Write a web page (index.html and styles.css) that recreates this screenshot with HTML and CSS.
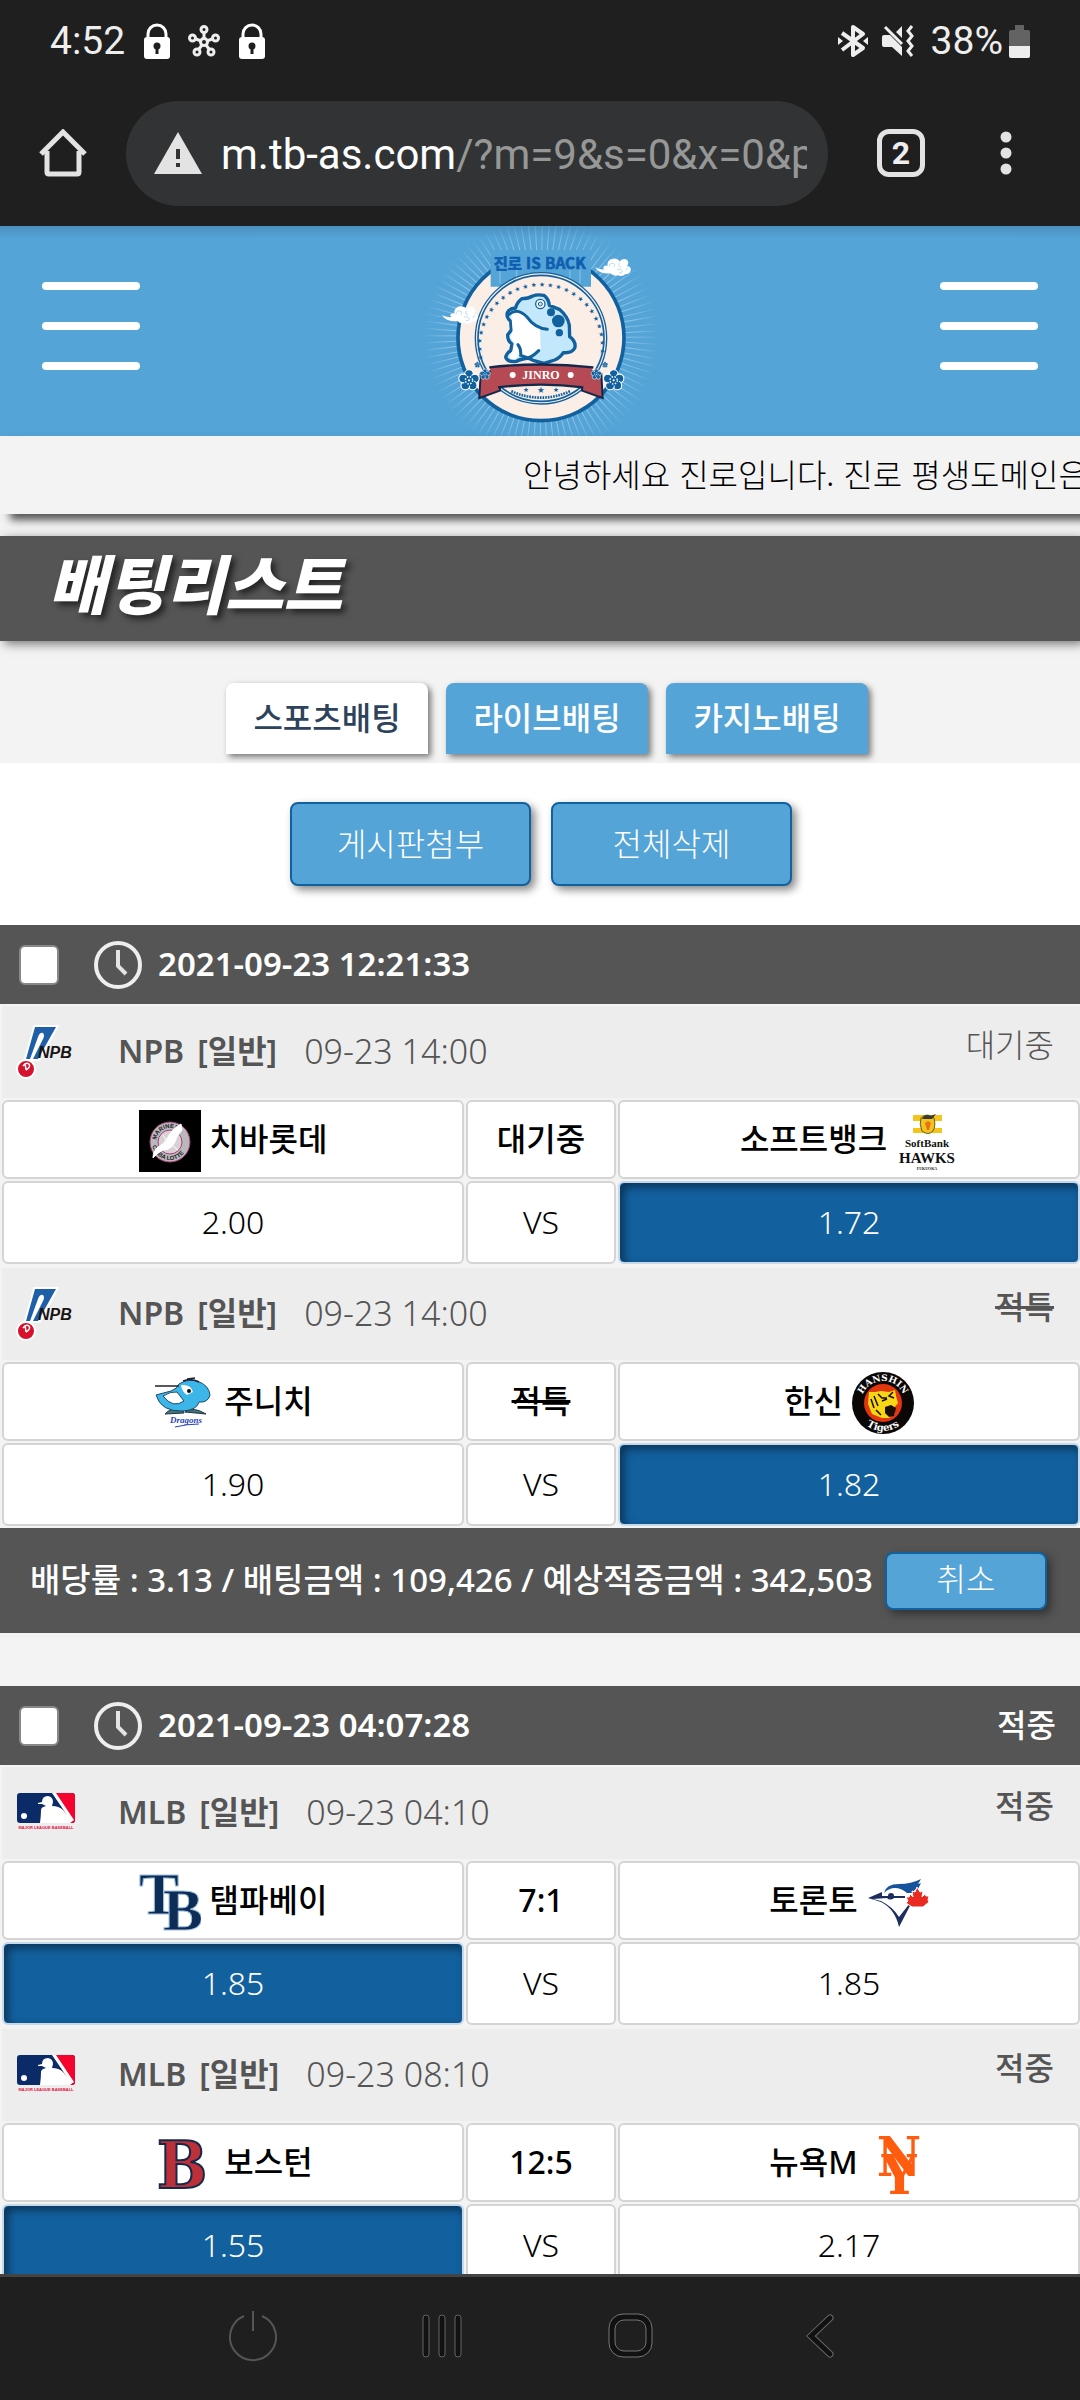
FILE: index.html
```html
<!DOCTYPE html>
<html lang="ko">
<head>
<meta charset="utf-8">
<meta name="viewport" content="width=device-width, initial-scale=1">
<title>배팅리스트</title>
<link rel="stylesheet" href="styles.css">
</head>
<body>
<svg class="defs" aria-hidden="true">
  <symbol id="lock" viewBox="0 0 26 36"><path d="M4 16V11a9 9 0 0 1 18 0v5" fill="none" stroke="#fff" stroke-width="3"/><rect y="14" width="26" height="22" rx="3" fill="#fff"/><circle cx="13" cy="23" r="3.500" fill="#1f1f1f"/><rect x="11.500" y="24" width="3" height="7" fill="#1f1f1f"/></symbol>
  <symbol id="clock" viewBox="0 0 48 48"><circle cx="24" cy="24" r="22" fill="none" stroke="#eee" stroke-width="4"/><path d="M24 9v16l8 8" fill="none" stroke="#e4e4e4" stroke-width="4"/></symbol>
  <symbol id="npb" viewBox="0 0 60 56">
    <path d="M19 4H40L23 36H10Z" fill="#1f5fa8" stroke="#fff" stroke-width="4"/>
    <path d="M19 4H40L22 36H10Z" fill="#1f5fa8"/>
    <path d="M14 36L22 14Q24 9 27 10Q29 12 27 16L17 36Z" fill="#fff"/>
    <text x="22" y="35" class="npb-text">NPB</text>
    <ellipse cx="10" cy="46" rx="9" ry="9" fill="#d7102b" stroke="#fff" stroke-width="2"/>
    <path d="M7 43q3-4 6-2q2 3-3 6M9 40l1 7" fill="none" stroke="#fff" stroke-width="1.500"/>
  </symbol>
  <symbol id="mlb" viewBox="0 0 58 38">
    <rect width="58" height="30" rx="3" fill="#0a2a68"/>
    <path d="M38 0H55a3 3 0 0 1 3 3V27a3 3 0 0 1-3 3H53Z" fill="#f5022f"/>
    <path d="M35 0H39L57 27L53 30H23Q24 22 24 17Q24 14 29 13L25 11H21V10L25 9Q25 3 31 3Q36 4 36 9L35 13Q42 13 46 17L50 22Z" fill="#fff"/>
    <circle cx="7" cy="23" r="3" fill="#fff"/>
    <text x="29" y="36" text-anchor="middle" class="mlb-text">MAJOR LEAGUE BASEBALL</text>
  </symbol>
  <symbol id="flower" viewBox="-32 -32 64 64">
    <g fill="#12619f" stroke="#fff" stroke-width="3"><circle cy="-17" r="12"/><circle cx="16" cy="-5" r="12"/><circle cx="10" cy="14" r="12"/><circle cx="-10" cy="14" r="12"/><circle cx="-16" cy="-5" r="12"/></g>
    <circle r="15" fill="#12619f"/><circle r="10" fill="none" stroke="#fff" stroke-width="4" stroke-dasharray="4 4"/><circle r="3" fill="#fff"/>
  </symbol>
  <symbol id="cloud" viewBox="0 0 110 60">
    <path d="M0 30Q12 38 30 36Q22 34 26 28Q31 22 37 26Q36 6 54 4Q68 2 74 12Q86 0 96 8Q104 16 96 26Q110 28 107 40Q104 50 92 50Q82 60 68 54Q56 58 46 48Q14 52 0 30Z" fill="#fff"/>
    <path d="M42 28q2-12 14-10q8 6 0 12M74 16q-8 10 4 14M66 36q14-2 16 6q-2 8-10 4M92 40q6-4 4-10" fill="none" stroke="#9fcbe8" stroke-width="2"/>
  </symbol>
</svg>

<header class="device">
  <div class="status">
    <span>4:52</span>
    <svg class="lock" role="img" aria-label="잠금"><use href="#lock"/></svg>
    <svg class="hub" viewBox="0 0 32 32" role="img" aria-label="허브"><g fill="none" stroke="#eee" stroke-width="3"><circle cx="16" cy="17" r="3.500"/><circle cx="16" cy="4.500" r="3"/><circle cx="27.500" cy="13" r="3"/><circle cx="23" cy="27" r="3"/><circle cx="9" cy="27" r="3"/><circle cx="4.500" cy="13" r="3"/><path d="M16 8v5M19 16l5-2M18 20l3 4M14 20l-3 4M13 16l-5-2"/></g></svg>
    <svg class="lock" role="img" aria-label="잠금"><use href="#lock"/></svg>
    <span class="status-fill"></span>
    <svg class="bt" viewBox="0 0 30 34" role="img" aria-label="블루투스"><path d="M4 9L25 24L15 31V3L25 10L4 26" fill="none" stroke="#eee" stroke-width="4" stroke-linejoin="round"/><path d="M0 13l5 4l-5 4ZM30 13l-5 4l5 4Z" fill="#eee"/></svg>
    <svg class="mute" viewBox="0 0 32 34" role="img" aria-label="무음"><path d="M2 11H8L20 23V32L10 23H2Q0 23 0 21V13Q0 11 2 11ZM14 8L20 2V14Z" fill="#eee"/><path d="M3 3L20 20" stroke="#eee" stroke-width="3"/><path d="M30 2l-4 5l4 5l-4 5l4 5l-4 5l4 5" fill="none" stroke="#eee" stroke-width="3"/></svg>
    <span class="pct">38%</span>
    <svg class="battery" viewBox="0 0 21 33" role="img" aria-label="배터리"><path d="M6 0h9v5h4a2 2 0 0 1 2 2v14H0V7a2 2 0 0 1 2-2h4Z" fill="#636363"/><path d="M0 21h21v10a2 2 0 0 1-2 2H2a2 2 0 0 1-2-2Z" fill="#eee"/></svg>
  </div>
  <div class="toolbar">
    <button class="tool home" aria-label="홈"><svg width="48" height="48" viewBox="0 0 48 48"><path d="M2 25L24 3L46 25M8 22V43Q8 45 10 45H38Q40 45 40 43V22" fill="none" stroke="#e3e3e3" stroke-width="5"/></svg></button>
    <button class="address">
      <svg width="48" height="42" viewBox="0 0 48 42" aria-hidden="true"><path d="M24 0L48 42H0Z" fill="#e3e3e3"/><path d="M22 17h4v10h-4ZM22 31h4v4h-4Z" fill="#323335"/></svg>
      <span class="url">m.tb-as.com<span class="path">/?m=9&amp;s=0&amp;x=0&amp;p</span></span>
    </button>
    <button class="tool tabs-btn" aria-label="탭 2개"><span>2</span></button>
    <button class="tool more" aria-label="더보기"><svg width="12" height="44" viewBox="0 0 12 44"><g fill="#e3e3e3"><circle cx="6" cy="6" r="5.500"/><circle cx="6" cy="22" r="5.500"/><circle cx="6" cy="38" r="5.500"/></g></svg></button>
  </div>
</header>

<main class="page">
  <div class="brand">
    <button class="burger" aria-label="왼쪽 메뉴"><i></i><i></i><i></i></button>
    <a href="#" class="logo">
      <svg width="280" height="210" viewBox="0 18 840 630" role="img" aria-label="진로 IS BACK">
        <defs>
          <radialGradient id="fade" gradientUnits="userSpaceOnUse" cx="423" cy="350" r="355"><stop offset=".7" stop-color="#fff" stop-opacity=".45"/><stop offset="1" stop-color="#fff" stop-opacity="0"/></radialGradient>
          <path id="starArc" d="M250 420A178 178 0 1 1 596 420"/>
        </defs>
        <circle cx="423" cy="350" r="255" fill="none" stroke="url(#fade)" stroke-width="200" pathLength="100" stroke-dasharray=".16 .84"/>
        <circle cx="423" cy="353" r="249" fill="#fbeee6" stroke="#12619f" stroke-width="11"/>
        <path d="M272 90H573V200H272Z" fill="#54a4d8"/>
        <path d="M300 150v40M350 150v30M540 150v40M510 150v40" stroke="#8cc2e4" stroke-width="3"/>
        <circle cx="423" cy="355" r="197" fill="#fbeee6" stroke="#12619f" stroke-width="4"/>
        <circle cx="423" cy="355" r="189" fill="none" stroke="#12619f" stroke-width="5"/>
        <text class="jinro-stars"><textPath href="#starArc">★ ★ ★ ★ ★ ★ ★ ★ ★ ★ ★ ★ ★ ★ ★ ★ ★ ★ ★ ★ ★ ★ ★ ★ ★ ★</textPath></text>
        <text x="419" y="146" text-anchor="middle" class="jinro-top">진로 IS BACK</text>
        <path d="M322 278Q326 266 347 264Q350 248 366 236Q385 236 398 228Q412 222 432 226Q446 236 448 256L478 268Q504 290 508 316L509 350Q530 366 524 385Q516 400 490 398Q480 414 464 420L432 430L402 422L384 414Q358 418 350 424Q324 428 317 412Q320 398 332 392L336 372Q322 362 323 344L334 330L332 304Q318 292 322 278Z" fill="#c3e7fb" stroke="#12619f" stroke-width="10" stroke-linejoin="round"/>
        <path d="M334 284Q360 262 384 296Q402 314 420 322L422 388Q404 392 396 412L376 410L356 404Q352 420 334 416Q322 412 338 394L342 368L330 352L338 334Z" fill="#fff"/>
        <path d="M326 284Q352 260 382 292Q404 324 442 328M354 374Q364 386 362 406L384 414Q398 410 416 392" fill="none" stroke="#12619f" stroke-width="9" stroke-linecap="round"/>
        <g fill="#12619f"><circle cx="475" cy="303" r="19"/><circle cx="453" cy="277" r="12"/><circle cx="478" cy="338" r="11"/></g>
        <circle cx="421" cy="252" r="14" fill="#fff" stroke="#12619f" stroke-width="4"/><circle cx="421" cy="252" r="6" fill="#c3e7fb" stroke="#12619f" stroke-width="3"/>
        <path d="M242 462L300 446V512L238 534Z" fill="#b64a54" stroke="#14284a" stroke-width="6"/>
        <path d="M604 462L546 446V512L608 534Z" fill="#b64a54" stroke="#14284a" stroke-width="6"/>
        <path d="M268 442Q423 425 580 442L550 502Q423 486 294 502Z" fill="#b64a54"/>
        <path d="M268 442Q423 425 580 442M294 502Q423 486 550 502" fill="none" stroke="#14284a" stroke-width="7"/>
        <text x="423" y="476" text-anchor="middle" class="jinro-name">JINRO</text>
        <circle cx="338" cy="465" r="9" fill="#fff"/><circle cx="512" cy="465" r="9" fill="#fff"/>
        <text x="423" y="520" text-anchor="middle" class="jinro-foot">★</text><text x="378" y="515" text-anchor="middle" class="jinro-stars">★</text><text x="468" y="515" text-anchor="middle" class="jinro-stars">★</text>
        <path d="M334 514Q423 552 510 514" fill="none" stroke="#12619f" stroke-width="8" stroke-dasharray="5 3"/>
        <use href="#flower" x="172" y="446" width="70" height="70"/><use href="#flower" x="606" y="446" width="70" height="70"/>
        <use href="#flower" x="237" y="445" width="36" height="36"/><use href="#flower" x="571" y="445" width="36" height="36"/>
        <use href="#flower" x="222" y="424" width="20" height="20"/><use href="#flower" x="605" y="424" width="20" height="20"/>
        <use href="#cloud" x="125" y="255" width="112" height="60"/><use href="#cloud" x="584" y="112" width="112" height="60"/>
      </svg>
    </a>
    <button class="burger" aria-label="오른쪽 메뉴"><i></i><i></i><i></i></button>
  </div>
  <div class="notice"><p>안녕하세요 진로입니다. 진로 평생도메인은</p></div>
  <h1 class="title">배팅리스트</h1>
  <nav class="tabs"><a href="#" class="tab active">스포츠배팅</a><a href="#" class="tab">라이브배팅</a><a href="#" class="tab">카지노배팅</a></nav>
  <div class="actions"><button class="btn">게시판첨부</button><button class="btn">전체삭제</button></div>

  <section class="ticket">
    <div class="ticket-head"><label class="pick"><input type="checkbox"><svg width="48" height="48" aria-hidden="true"><use href="#clock"/></svg><span>2021-09-23 12:21:33</span></label></div>
    <table class="match">
      <colgroup><col><col class="mid"><col></colgroup>
      <tr class="league"><th colspan="3"><div class="league-row"><svg class="league-logo" aria-hidden="true"><use href="#npb"/></svg><b>NPB</b><b>[일반]</b><time>09-23 14:00</time><span class="state">대기중</span></div></th></tr>
      <tr class="teams">
        <td><div class="team"><svg class="team-logo" viewBox="0 0 62 62" aria-hidden="true"><rect width="62" height="62" fill="#000"/><circle cx="31" cy="32" r="20" fill="#b9b9bd" stroke="#a83c78" stroke-width="1"/><circle cx="31" cy="32" r="12" fill="#d8d0d4" stroke="#a83c78"/><path id="lt" d="M17 32a14 14 0 0 1 28 0" fill="none"/><path id="lb" d="M13 32a18 18 0 0 0 36 0" fill="none"/><text class="tiny"><textPath href="#lt" startOffset="2">MARINES</textPath></text><text class="tiny"><textPath href="#lb" startOffset="4">CHIBA LOTTE</textPath></text><path d="M42 14L43 20Q37 27 36 32Q32 40 24 40Q18 43 14 48Q14 41 19 37Q26 34 29 27Q33 19 42 14ZM24 25l5 8M34 36l5 4" fill="#fff" stroke="#fff"/></svg><span>치바롯데</span></div></td>
        <td>대기중</td>
        <td><div class="team"><span>소프트뱅크</span><svg class="team-logo" viewBox="0 0 62 62" aria-hidden="true"><path d="M17 5h29v6H17ZM17 18h29v5H17Z" fill="#f3c51b"/><path d="M25 8Q31 2 38 8Q40 16 37 21Q32 26 26 21Q23 14 25 8Z" fill="#f3c51b" stroke="#6b5a16"/><path d="M26 9Q29 3 34 6L40 4L36 9Z" fill="#3c3a36"/><path d="M29 13l3-2l3 2l-2 7h-2Z" fill="#e8721a"/><text x="31" y="37" text-anchor="middle" class="sb">SoftBank</text><text x="31" y="53" text-anchor="middle" class="hawks">HAWKS</text><text x="31" y="60" text-anchor="middle" class="city">FUKUOKA</text></svg></div></td>
      </tr>
      <tr class="odds"><td>2.00</td><td>VS</td><td class="on">1.72</td></tr>
    </table>
    <table class="match">
      <colgroup><col><col class="mid"><col></colgroup>
      <tr class="league"><th colspan="3"><div class="league-row"><svg class="league-logo" aria-hidden="true"><use href="#npb"/></svg><b>NPB</b><b>[일반]</b><time>09-23 14:00</time><s class="state strong">적특</s></div></th></tr>
      <tr class="teams">
        <td><div class="team"><svg class="team-logo" viewBox="0 0 62 62" aria-hidden="true"><path d="M12 42Q18 35 30 36L31 41ZM32 40Q40 34 53 42Z" fill="#3f7478" stroke="#234"/><path d="M3 23L18 19Q24 17 26 12Q36 6 44 9Q56 13 57 23Q55 31 46 30Q44 38 30 39Q8 40 3 23Z" fill="#3cb6e8" stroke="#1c4a66"/><path d="M10 24Q18 19 24 20L31 29Q20 37 10 24Z" fill="#fff" stroke="#1c4a66"/><path d="M28 13Q38 12 40 20L34 23Q29 20 28 13Z" fill="#fff"/><circle cx="36" cy="19" r="2" fill="#111"/><path d="M2 14H26M30 9Q38 6 46 10M34 7l8-1" stroke="#223" stroke-width="1.500" fill="none"/><text x="33" y="51" text-anchor="middle" class="dragons">Dragons</text><path d="M22 55Q34 52 46 52" stroke="#2b3fc0" fill="none"/></svg><span>주니치</span></div></td>
        <td><s>적특</s></td>
        <td><div class="team"><span>한신</span><svg class="team-logo" viewBox="0 0 62 62" aria-hidden="true"><circle cx="31" cy="31" r="31" fill="#0b0707"/><circle cx="31" cy="31" r="19" fill="#e2370e"/><path id="ht" d="M9 31a22 22 0 0 1 44 0" fill="none"/><path id="hb" d="M3 31a28 28 0 0 0 56 0" fill="none"/><text class="han"><textPath href="#ht" startOffset="50%" text-anchor="middle">HANSHIN</textPath></text><text class="han low"><textPath href="#hb" startOffset="50%" text-anchor="middle">Tigers</textPath></text><path d="M17 20l6 0l6-1l8 1l6-2l1 6l2 7l-4 5l1 6l-6 4h-7L20 42l-4-10Z" fill="#f7d616"/><path d="M22 24l4 10M19 27l3 9M26 22l4 4h5M30 29l5-2M41 20l-4 4l5 2M24 38l5 5" stroke="#1a0d06" stroke-width="1.500" fill="none"/><path d="M33 35l6-2l5 3l-2 8l-5 1l-4-4Z" fill="#1a0d06"/></svg></div></td>
      </tr>
      <tr class="odds"><td>1.90</td><td>VS</td><td class="on">1.82</td></tr>
    </table>
    <div class="summary"><p>배당률 : 3.13 / 배팅금액 : 109,426 / 예상적중금액 : 342,503</p><button class="btn small">취소</button></div>
  </section>

  <section class="ticket">
    <div class="ticket-head"><label class="pick"><input type="checkbox"><svg width="48" height="48" aria-hidden="true"><use href="#clock"/></svg><span>2021-09-23 04:07:28</span></label><span>적중</span></div>
    <table class="match">
      <colgroup><col><col class="mid"><col></colgroup>
      <tr class="league"><th colspan="3"><div class="league-row"><svg class="league-logo" aria-hidden="true"><use href="#mlb" y="9" height="38"/></svg><b>MLB</b><b>[일반]</b><time>09-23 04:10</time><span class="state strong">적중</span></div></th></tr>
      <tr class="teams">
        <td><div class="team"><svg class="team-logo" viewBox="0 0 62 62" aria-hidden="true"><g class="tb"><text x="0" y="43">T</text><text x="24" y="59">B</text></g></svg><span>탬파베이</span></div></td>
        <td>7:1</td>
        <td><div class="team"><span>토론토</span><svg class="team-logo" viewBox="0 0 62 62" aria-hidden="true"><path d="M1 27L13 22Q18 12 28 14Q42 15 54 8L50 24L44 36L32 55Q28 40 14 30Z" fill="#fff"/><path d="M17 22Q19 13 32 13Q44 13 54 8L51 13L54 12L51 18Q48 17 46 22L40 22Q34 17 28 17Q22 17 17 22Z" fill="#17539c"/><path d="M1 27L15 21V25L38 25V27H27Q23 30 20 27L6 28L14 30Q26 36 32 46L43 32L41 31L44 33L32 56Q28 38 14 31Z" fill="#1c2d5e"/><circle cx="24" cy="25" r="3" fill="#1c2d5e"/><path d="M50 16l3 5l3-1l-1 6l3-3l1 2l3 0l-1 4l1 2l-6 5h-11l-6-4l2-2l-2-4l3 0l1-3l3 3l-1-6l3 1Z" fill="#ea2a20" stroke="#fff" stroke-width="1"/></svg></div></td>
      </tr>
      <tr class="odds"><td class="on">1.85</td><td>VS</td><td>1.85</td></tr>
    </table>
    <table class="match">
      <colgroup><col><col class="mid"><col></colgroup>
      <tr class="league"><th colspan="3"><div class="league-row"><svg class="league-logo" aria-hidden="true"><use href="#mlb" y="9" height="38"/></svg><b>MLB</b><b>[일반]</b><time>09-23 08:10</time><span class="state strong">적중</span></div></th></tr>
      <tr class="teams">
        <td><div class="team"><svg class="team-logo" viewBox="0 0 62 62" aria-hidden="true"><text x="29" y="55" text-anchor="middle" class="bos">B</text></svg><span>보스턴</span></div></td>
        <td>12:5</td>
        <td><div class="team"><span>뉴욕M</span><svg class="team-logo" viewBox="0 0 62 62" aria-hidden="true"><g class="ny"><text x="32" y="43" text-anchor="middle">N</text><text x="32" y="61" text-anchor="middle">Y</text></g></svg></div></td>
      </tr>
      <tr class="odds"><td class="on">1.55</td><td>VS</td><td>2.17</td></tr>
    </table>
  </section>
</main>

<nav class="keys">
  <button aria-label="전원"><svg width="50" height="52" viewBox="0 0 50 52"><path d="M16 6A23 23 0 1 0 34 6M25 1V21" fill="none" stroke="#555" stroke-width="2"/></svg></button>
  <button aria-label="최근 앱"><svg width="42" height="46" viewBox="0 0 42 46"><g fill="#111" stroke="#666"><rect x="2" y="2" width="6" height="42" rx="3"/><rect x="18" y="2" width="6" height="42" rx="3"/><rect x="34" y="2" width="6" height="42" rx="3"/></g></svg></button>
  <button aria-label="홈 화면"><svg width="46" height="46" viewBox="0 0 46 46"><rect x="1" y="1" width="43" height="43" rx="14" fill="#111" stroke="#777"/><rect x="7" y="7" width="31" height="31" rx="9" fill="#1f1f1f" stroke="#777"/></svg></button>
  <button aria-label="뒤로"><svg width="28" height="46" viewBox="0 0 28 46"><path d="M24 5L5 23L24 41" fill="none" stroke="#666" stroke-width="7" stroke-linecap="round"/><path d="M24 5L5 23L24 41" fill="none" stroke="#111" stroke-width="5" stroke-linecap="round"/></svg></button>
</nav>
</body>
</html>
```
FILE: styles.css
```css
* { box-sizing: border-box; }
body {
  margin: 0;
  height: 100vh;
  display: flex;
  flex-direction: column;
  background: #f3f3f3;
  color: #000;
  font-family: "Noto Sans CJK KR", sans-serif;
  font-size: 32px;
  line-height: 40px;
}
button { margin: 0; padding: 0; border: 0; background: none; font: inherit; color: inherit; }
a { color: inherit; text-decoration: none; }
p { margin: 0; }
svg { display: block; flex: none; }
.defs { position: absolute; width: 0; height: 0; }

/* phone status bar and browser toolbar */
.device { flex: none; background: #1f1f1f; color: #eee; font-family: Roboto, sans-serif; }
.status { display: flex; align-items: center; height: 80px; padding: 2px 50px 0; font-size: 39px; }
.lock { width: 26px; height: 36px; margin-left: 19px; }
.hub { width: 32px; height: 32px; margin-left: 18px; }
.status-fill { flex: 1; }
.bt { width: 30px; height: 34px; }
.mute { width: 32px; height: 34px; margin-left: 14px; }
.pct { margin: 0 6px 0 17px; }
.battery { width: 21px; height: 33px; }
.toolbar { display: flex; align-items: center; height: 146px; padding: 0 42px 0 0; }
.tool { display: flex; align-items: center; justify-content: center; flex: none; height: 100px; }
.home { width: 126px; }
.address {
  display: flex;
  align-items: center;
  gap: 19px;
  flex: 1;
  min-width: 0;
  height: 105px;
  padding: 0 21px 0 28px;
  border-radius: 53px;
  background: #323335;
  font-size: 42px;
  color: #fff;
}
.url { flex: 1; overflow: hidden; padding-top: 4px; white-space: nowrap; text-align: left; line-height: 56px; }
.path { color: #969897; }
.tabs-btn { width: 146px; }
.tabs-btn span { width: 48px; height: 48px; border: 5px solid #e3e3e3; border-radius: 12px; font-size: 32px; font-weight: 700; line-height: 38px; }
.more { width: 64px; }

/* scrolling page */
.page { flex: 1; min-height: 0; overflow-x: hidden; overflow-y: auto; scrollbar-width: none; }
.brand {
  display: flex;
  align-items: center;
  justify-content: space-between;
  height: 210px;
  padding: 0 42px;
  background: linear-gradient(#4a8fbd, #54a4d8 12px);
}
.burger { display: flex; flex-direction: column; justify-content: space-between; width: 98px; height: 88px; margin-top: -10px; }
.burger i { height: 8px; border-radius: 4px; background: #fff; }
.jinro-top { font-size: 46px; font-weight: 700; fill: #0f5fb0; stroke: #0f5fb0; stroke-width: 2px; }
.jinro-stars { font-family: "DejaVu Sans", sans-serif; font-size: 20px; fill: #12619f; }
.jinro-foot { font-family: "DejaVu Sans", sans-serif; font-size: 26px; fill: #12619f; }
.jinro-name { font-family: "Liberation Serif", serif; font-size: 36px; font-weight: 700; fill: #fff; }

.notice { position: relative; height: 78px; padding-left: 523px; background: #f3f3f3; box-shadow: 10px 6px 8px #555; }
.notice p { width: 100%; overflow: hidden; white-space: nowrap; font-weight: 300; line-height: 74px; }
.title {
  position: relative;
  margin: 22px 0 0;
  padding-left: 48px;
  height: 105px;
  background: #555;
  box-shadow: 4px 3px 10px #777;
  color: #fff;
  font-size: 64px;
  font-style: italic;
  font-weight: 900;
  line-height: 90px;
  text-shadow: 4px 4px 6px #222;
}
.tabs { display: flex; justify-content: center; gap: 18px; height: 122px; padding: 42px 0 0 14px; }
.tab {
  width: 202px;
  height: 71px;
  border-radius: 8px 8px 0 0;
  background: #54a4d8;
  box-shadow: 3px 3px 6px #777;
  color: #fff;
  font-weight: 500;
  line-height: 66px;
  text-align: center;
}
.tab.active { background: #fff; color: #2d435c; }
.actions { display: flex; justify-content: center; gap: 20px; padding: 39px 0 39px 2px; background: #fff; }
.btn {
  width: 241px;
  height: 84px;
  padding-bottom: 4px;
  border: 2px solid #12619f;
  border-radius: 8px;
  background: #54a4d8;
  box-shadow: 4px 4px 8px #888;
  color: #fff;
  font-weight: 300;
}
.btn.small { flex: none; width: 162px; height: 58px; box-shadow: 4px 4px 8px #333; }

/* betting slips */
.ticket { margin-bottom: 53px; }
.ticket-head {
  display: flex;
  align-items: center;
  justify-content: space-between;
  height: 79px;
  padding: 0 24px 0 19px;
  background: #555;
  color: #fff;
  font-weight: 500;
}
.ticket-head, .league-row, .match td, .summary { font-family: "Noto Sans", "Noto Sans CJK KR", sans-serif; }
.pick { display: flex; align-items: center; font-size: 33px; font-weight: 600; }
.ticket-head span { padding-bottom: 2px; }
.pick input { appearance: none; width: 40px; height: 40px; margin: 0 35px 0 0; border: 2px solid #888; border-radius: 6px; background: #fff; }
.pick svg { margin-right: 16px; }
.match { width: calc(100% + 2px); border-spacing: 2px; table-layout: fixed; }
.mid { width: 150px; }
.match th, .match td { padding: 0 0 2px; }
.league { height: 92px; background: #ededed; color: #555; }
.league th { font-weight: 400; }
.league-row { display: flex; align-items: center; padding: 0 26px 0 14px; }
.league-logo { width: 60px; height: 56px; margin-right: 42px; }
.league-row b { margin-right: 13px; font-weight: 600; }
.league-row time { margin-left: 14px; font-size: 34px; font-weight: 300; }
.state { margin: -12px 0 0 auto; font-weight: 300; }
.strong { font-weight: 500; }
.match td { border: 2px solid #d4d4d4; border-radius: 6px; background: #fff; text-align: center; }
.teams { height: 79px; font-weight: 500; }
.odds { height: 83px; font-weight: 300; }
.match .on { border-color: #c6d9e8; background: #13609e; box-shadow: inset 4px 4px 8px #0a3558; color: #fff; }
.team { display: flex; align-items: center; justify-content: center; gap: 9px; }
.team-logo { width: 62px; height: 62px; margin-top: 5px; }
.summary { display: flex; align-items: center; gap: 12px; height: 105px; padding: 0 33px 0 30px; background: #555; color: #fff; font-weight: 500; white-space: nowrap; }
.summary p { flex: 1; padding-bottom: 2px; font-size: 33px; }

/* lettering inside the emblems */
.npb-text { font: italic 700 16px "Liberation Sans", sans-serif; fill: #1a1414; }
.mlb-text { font: 700 4px "Liberation Sans", sans-serif; fill: #e0103a; }
.tiny { font: 700 6px "Liberation Sans", sans-serif; fill: #222; }
.city { font: 700 4px "Liberation Serif", serif; fill: #222; }
.sb { font: 700 11px "Liberation Serif", serif; fill: #111; }
.hawks { font: 700 15px "Liberation Serif", serif; fill: #111; }
.dragons { font: italic 700 9px "Liberation Serif", serif; fill: #2b3fc0; }
.han { font: 700 9px "DejaVu Serif", serif; fill: #fff; }
.han.low { font-size: 10px; }
.tb { font: 700 60px "Liberation Serif", serif; fill: #0d2c56; stroke: #9dbfdf; stroke-width: 1px; }
.bos { font: 700 66px "DejaVu Serif Condensed", "DejaVu Serif", serif; fill: #bd3039; stroke: #14284a; stroke-width: 2px; }
.ny { font: 700 54px "DejaVu Serif Condensed", "DejaVu Serif", serif; fill: #ff5c10; }

/* phone navigation keys */
.keys { display: flex; justify-content: center; flex: none; height: 126px; padding-right: 8px; border-top: 3px solid #444; background: #1f1f1f; }
.keys button { display: flex; align-items: center; justify-content: center; width: 189px; height: 118px; }
```
